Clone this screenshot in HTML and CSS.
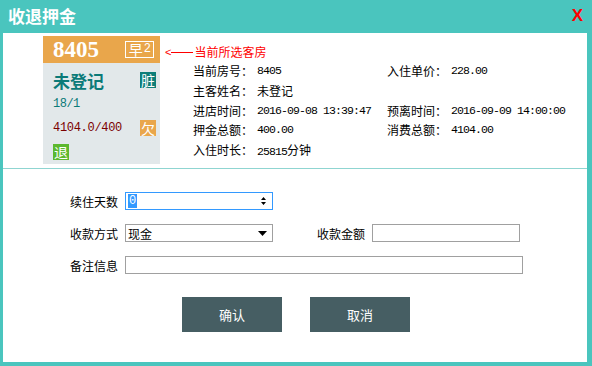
FILE: index.html
```html
<!DOCTYPE html>
<html lang="zh-CN">
<head>
    <meta charset="UTF-8">
    <title>收退押金</title>
    <link rel="stylesheet" href="styles.css">
</head>
<body>
    <div class="dialog">
        <div class="titlebar">
            <span class="title">收退押金</span>
            <span class="close">X</span>
        </div>
        <div class="content">
            <div class="top">
                <div class="room-card">
                    <div class="room-head">
                        <span class="room-no">8405</span>
                        <span class="early">早<small>2</small></span>
                    </div>
                    <div class="room-body">
                        <div class="row-name">
                            <span class="guest">未登记</span>
                            <span class="badge dirty">脏</span>
                        </div>
                        <div class="row-count">18/1</div>
                        <div class="row-money">
                            <span class="money">4104.0/400</span>
                            <span class="badge owe">欠</span>
                        </div>
                        <div class="row-back">
                            <span class="badge back">退</span>
                        </div>
                    </div>
                </div>
                <div class="side">
                    <div class="note"><span class="arrow">&lt;</span><span class="line"></span>当前所选客房</div>
                    <div class="info">
                        <span>当前房号：</span><span class="num">8405</span>
                        <span>入住单价：</span><span class="num">228.00</span>
                        <span>主客姓名：</span><span>未登记</span>
                        <span></span><span></span>
                        <span>进店时间：</span><span class="num">2016-09-08 13:39:47</span>
                        <span>预离时间：</span><span class="num">2016-09-09 14:00:00</span>
                        <span>押金总额：</span><span class="num">400.00</span>
                        <span>消费总额：</span><span class="num">4104.00</span>
                        <span>入住时长：</span><span><span class="num">25815</span>分钟</span>
                    </div>
                </div>
            </div>
            <div class="divider"></div>
            <div class="form">
                <div class="form-row">
                    <label>续住天数</label>
                    <div class="field focus short">
                        <span class="sel">0</span>
                        <svg class="spin" width="7" height="10" viewBox="0 0 7 10"><path d="M3.5 1 L6 4 H1 Z M1 6 H6 L3.5 9 Z" fill="#000"/></svg>
                    </div>
                </div>
                <div class="form-row">
                    <label>收款方式</label>
                    <div class="field short">
                        <span>现金</span>
                        <svg class="drop" width="9" height="5" viewBox="0 0 9 5"><path d="M0 0 H9 L4.5 5 Z" fill="#000"/></svg>
                    </div>
                    <label class="gap">收款金额</label>
                    <div class="field short"></div>
                </div>
                <div class="form-row">
                    <label>备注信息</label>
                    <div class="field long"></div>
                </div>
            </div>
            <div class="actions">
                <button class="btn">确认</button>
                <button class="btn">取消</button>
            </div>
        </div>
    </div>
</body>
</html>
```

FILE: styles.css
```css
body {
    margin: 0;
    font-family: "Noto Sans CJK SC", "Liberation Sans", sans-serif;
    font-size: 12px;
    color: #000;
}
.dialog {
    width: 592px;
    height: 366px;
    box-sizing: border-box;
    background-color: #4ac5be;
    padding: 0 5px 4px 3px;
    display: flex;
    flex-direction: column;
}
.titlebar {
    height: 33px;
    display: flex;
    align-items: center;
    justify-content: space-between;
    padding: 0 4px 2px 5px;
    box-sizing: border-box;
}
.title {
    color: #fff;
    font-size: 17px;
    font-weight: bold;
}
.close {
    color: #ff0000;
    font-family: "Liberation Sans", sans-serif;
    font-weight: bold;
    font-size: 17px;
}
.content {
    flex: 1;
    background-color: #fff;
    display: flex;
    flex-direction: column;
}
.top {
    height: 135px;
    display: flex;
    padding: 3px 0 0 40px;
    box-sizing: border-box;
}
.room-card {
    width: 117px;
    height: 128px;
    background-color: #e2e8ea;
}
.room-head {
    height: 27px;
    background-color: #e9a64b;
    display: flex;
    align-items: center;
    justify-content: space-between;
    padding: 0 6px 0 10px;
}
.room-no {
    color: #fff;
    font-family: "Liberation Serif", serif;
    font-weight: bold;
    font-size: 23px;
    line-height: 1;
}
.early {
    border: 1px solid #fff;
    color: #fff;
    font-size: 14px;
    line-height: 15px;
    height: 15px;
    padding: 0 2px 0 3px;
    display: flex;
    align-items: center;
}
.early small {
    font-family: "Liberation Mono", monospace;
    font-size: 12px;
    margin-left: 1px;
}
.room-body {
    padding: 9px 4px 0 10px;
}
.row-name, .row-money, .row-back {
    height: 16px;
    display: flex;
    align-items: center;
    justify-content: space-between;
}
.guest {
    color: #0b7a78;
    font-weight: bold;
    font-size: 17px;
}
.row-count {
    height: 32px;
    line-height: 32px;
    color: #0b7a78;
    font-family: "Liberation Mono", monospace;
    font-size: 12px;
    letter-spacing: -0.5px;
}
.money {
    color: #7a0000;
    font-family: "Liberation Mono", monospace;
    font-size: 12px;
    letter-spacing: -0.3px;
}
.row-back {
    margin-top: 8px;
}
.badge {
    width: 16px;
    height: 16px;
    color: #fff;
    font-size: 14px;
    line-height: 16px;
    text-align: center;
}
.dirty { background-color: #0d7e79; }
.owe { background-color: #e9a64b; }
.back { background-color: #5cb82e; }
.side {
    margin-left: 5px;
}
.note {
    color: #ff0000;
    margin-top: 8px;
    height: 16px;
    line-height: 16px;
    display: flex;
    align-items: center;
}
.arrow {
    font-family: "Liberation Sans", sans-serif;
    font-size: 11px;
}
.line {
    width: 22px;
    height: 1px;
    background-color: #ff0000;
    margin-right: 1px;
}
.info {
    margin-left: 28px;
    margin-top: 1px;
    display: grid;
    grid-template-columns: 64px 130px 64px auto;
    grid-auto-rows: 19.7px;
    align-items: center;
}
.num {
    font-family: "Liberation Mono", monospace;
    font-size: 11.5px;
    letter-spacing: -0.9px;
}
.divider {
    height: 1px;
    background-color: #8fd5d1;
}
.form {
    padding: 23px 0 0 67px;
    display: flex;
    flex-direction: column;
    gap: 14px;
}
.form-row {
    display: flex;
    align-items: center;
    height: 18px;
}
.form-row label {
    width: 48px;
    margin-right: 7px;
    text-align: right;
}
.form-row label.gap {
    margin-left: 44px;
}
.field {
    height: 18px;
    box-sizing: border-box;
    border: 1px solid #a0a0a0;
    display: flex;
    align-items: center;
    justify-content: space-between;
    padding: 0 5px 0 2px;
}
.field.focus {
    border-color: #3399ff;
}
.short { width: 148px; }
.long { width: 398px; }
.sel {
    background-color: #3399ff;
    color: #fff;
    font-family: "Liberation Mono", monospace;
    line-height: 14px;
    padding: 0 1px;
}
.actions {
    display: flex;
    gap: 28px;
    padding: 23px 0 0 179px;
}
.btn {
    width: 100px;
    height: 35px;
    border: none;
    background-color: #465e63;
    color: #fff;
    font-family: "Noto Sans CJK SC", sans-serif;
    font-size: 13px;
}
```
